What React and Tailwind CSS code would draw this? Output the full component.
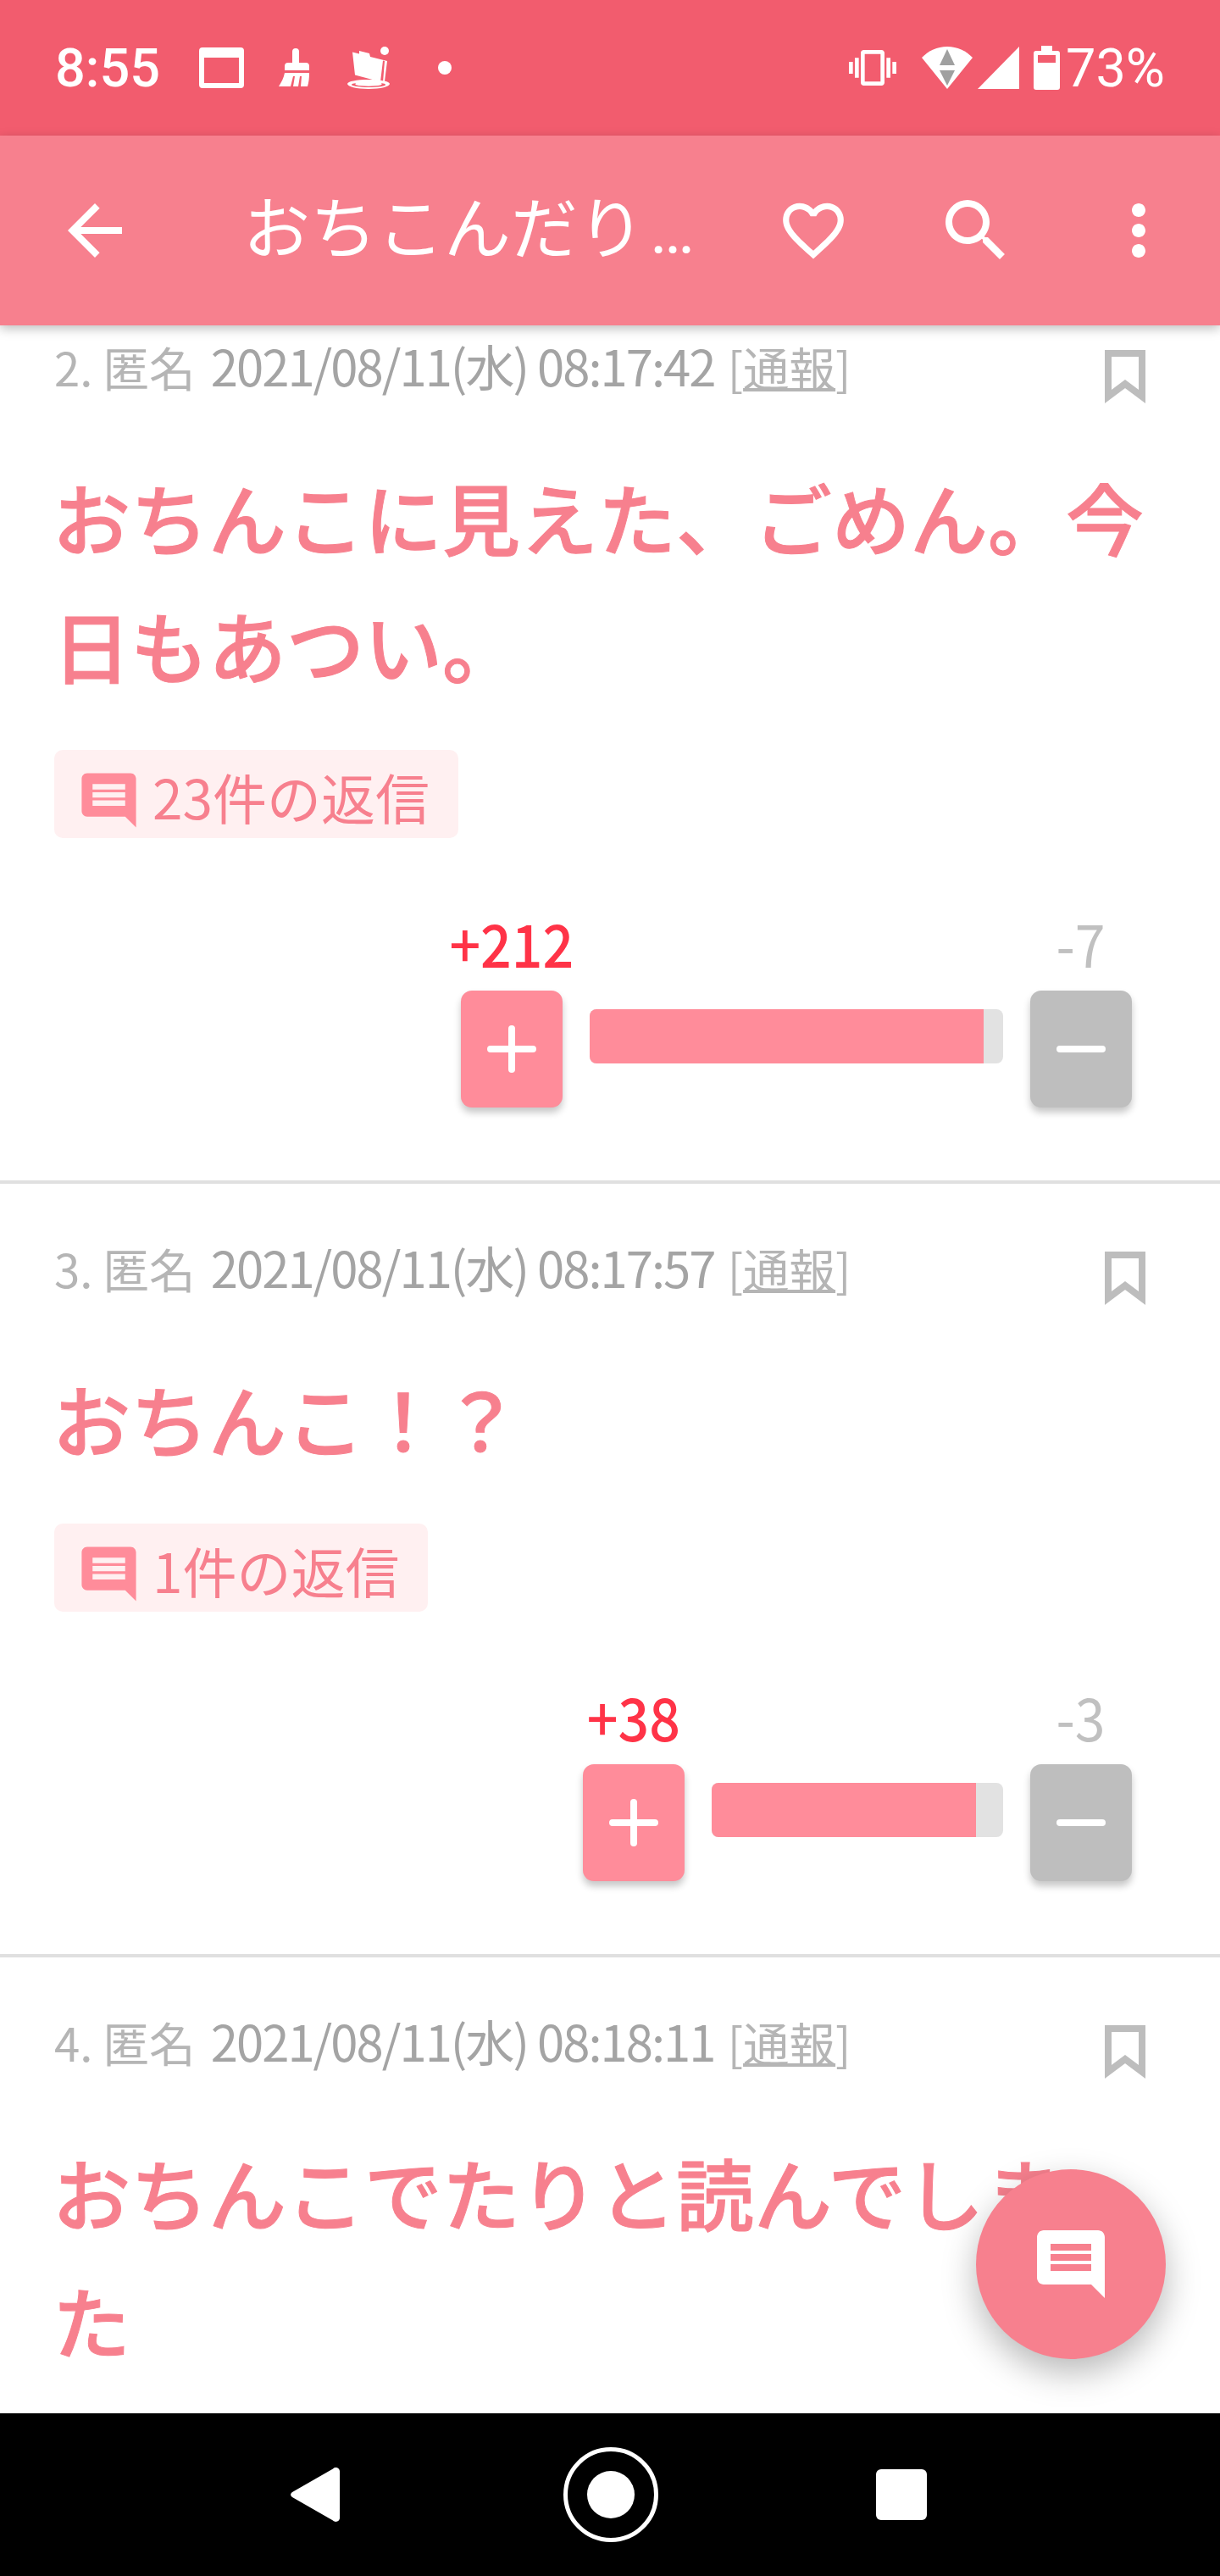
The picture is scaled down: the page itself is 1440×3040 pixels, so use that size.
import React from 'react';

const cjk = "font-['Noto_Sans_CJK_JP',sans-serif]";

const posts = [
    {
        id: 2,
        time: '2021/08/11(水) 08:17:42',
        title: 'おちんこに見えた、ごめん。今日もあつい。',
        replies: '23件の返信',
        badgeWidth: 'w-[477px]',
        plus: '+212',
        minus: '-7',
        barWidth: 'w-[488px]',
        fillWidth: 'w-[465px]',
        titleHeight: 'h-[302px]',
    },
    {
        id: 3,
        time: '2021/08/11(水) 08:17:57',
        title: 'おちんこ！？',
        replies: '1件の返信',
        badgeWidth: 'w-[441px]',
        plus: '+38',
        minus: '-3',
        barWidth: 'w-[344px]',
        fillWidth: 'w-[312px]',
        titleHeight: 'h-[151px]',
    },
    {
        id: 4,
        time: '2021/08/11(水) 08:18:11',
        title: 'おちんこでたりと読んでしまった',
        titleHeight: 'h-[302px]',
    },
];

const MessageIcon = ({ className }) => (
    <svg viewBox="0 0 24 24" fill="currentColor" className={className}>
        <path d="M20 2H4c-1.1 0-1.99.9-1.99 2L2 22l4-4h14c1.1 0 2-.9 2-2V4c0-1.1-.9-2-2-2zm-2 12H6v-2h12v2zm0-3H6V9h12v2zm0-3H6V6h12v2z" />
    </svg>
);

const StatusBar = () => (
    <div className="h-[160px] shrink-0 bg-[#f25c6e] text-white flex items-center justify-between pl-[65px] pr-[65px]">
        <div className="flex items-center">
            <span className="font-['Roboto',sans-serif] font-medium text-[63px] leading-none w-[170px]">8:55</span>
            <svg viewBox="0 0 53 48" className="w-[53px] h-[48px]" fill="currentColor">
                <path fillRule="evenodd" d="M4 0h45a4 4 0 0 1 4 4v40a4 4 0 0 1-4 4H4a4 4 0 0 1-4-4V4a4 4 0 0 1 4-4zM6 12v30h41V12z" />
            </svg>
            <svg viewBox="0 0 36 46" className="w-[36px] h-[46px] ml-[41px]" fill="currentColor">
                <path d="M16 4a4 4 0 0 1 8 0v13h8a4 4 0 0 1 4 4v5H7v-5a4 4 0 0 1 4-4h5z" />
                <path d="M7 29h29c0 6-.5 11-2 16h-8l1-12h-2l-2 12h-6l2-12h-2l-3 12H0c3-5 6-10 7-16z" />
            </svg>
            <svg viewBox="0 0 50 50" className="w-[50px] h-[50px] ml-[45px]" fill="currentColor">
                <path d="M14 5l12 3 1 4 20 5-3 24-2 1 2-25-2-.5-3 25-30-8-3-27 20 5-12-3z" />
                <circle cx="44" cy="5" r="5" />
                <path fillRule="evenodd" d="M25 39c14 0 25 2 25 5s-11 6-25 6S0 47 0 44s11-5 25-5zm-15 4c-3 .5-5 1-5 2s9 3 20 3 20-1 20-3c0-1-2-1.500-5-2 1 1 1 2-1 2.500-6 1.500-22 1.500-28 0-2-.5-2-1.500-1-2.500z" />
            </svg>
            <span className="w-[16px] h-[16px] rounded-full bg-white ml-[57px]" />
        </div>
        <div className="flex items-center">
            <svg viewBox="0 0 24 24" className="w-[56px] h-[56px]" fill="currentColor">
                <path d="M0 15h2V9H0v6zm3 2h2V7H3v10zm19-8v6h2V9h-2zm-3 8h2V7h-2v10zM16.500 3h-9C6.670 3 6 3.670 6 4.500v15c0 .83.67 1.500 1.500 1.500h9c.83 0 1.500-.67 1.500-1.500v-15c0-.83-.67-1.500-1.500-1.500zM16 19H8V5h8v14z" />
            </svg>
            <svg viewBox="0 0 60 50" className="w-[60px] h-[50px] ml-[30px]">
                <path d="M0 13C8 5 18 0 30 0s22 5 30 13L30 50z" fill="#fff" />
                <path d="M30 3l9 19H21z" fill="#a0a0a0" />
                <path d="M21 28h18l-9 18z" fill="#a0a0a0" />
            </svg>
            <svg viewBox="0 0 49 50" className="w-[49px] h-[50px] ml-[6px]" fill="currentColor">
                <path d="M0 50L49 0v50z" />
            </svg>
            <svg viewBox="0 0 31 52" className="w-[31px] h-[52px] ml-[17px]" fill="currentColor">
                <path fillRule="evenodd" d="M9 0h13v6h6a3 3 0 0 1 3 3v40a3 3 0 0 1-3 3H3a3 3 0 0 1-3-3V9a3 3 0 0 1 3-3h6zM5 11v9h21v-9z" />
            </svg>
            <span className="font-['Roboto',sans-serif] text-[63px] leading-none ml-[7px]">73%</span>
        </div>
    </div>
);

const AppBar = () => (
    <div className="relative z-10 h-[224px] shrink-0 bg-[#f7808e] text-white flex items-center shadow-[0_4px_12px_rgba(0,0,0,0.25)]">
        <svg viewBox="0 0 24 24" fill="currentColor" className="w-[96px] h-[96px] ml-[64px] shrink-0">
            <path d="M20 11H7.830l5.590-5.590L12 4l-8 8 8 8 1.410-1.410L7.830 13H20v-2z" />
        </svg>
        <div className={`ml-[127px] -mt-[8px] flex-1 text-[79px] leading-none whitespace-nowrap ${cjk}`}>
            おちこんだり<span className="ml-[6px] font-['Roboto',sans-serif]">…</span>
        </div>
        <div className="w-[192px] flex justify-center">
            <svg viewBox="0 0 24 24" fill="currentColor" className="w-[86px] h-[86px]">
                <path d="M16.500 3c-1.740 0-3.410.81-4.500 2.090C10.910 3.810 9.240 3 7.500 3 4.420 3 2 5.420 2 8.500c0 3.780 3.400 6.860 8.550 11.540L12 21.350l1.450-1.320C18.600 15.360 22 12.280 22 8.500 22 5.420 19.580 3 16.500 3zm-4.400 15.550l-.1.1-.1-.1C7.140 14.240 4 11.390 4 8.500 4 6.500 5.500 5 7.500 5c1.540 0 3.040.99 3.570 2.360h1.870C13.460 5.990 14.960 5 16.500 5c2 0 3.500 1.500 3.500 3.500 0 2.890-3.140 5.740-7.900 10.050z" />
            </svg>
        </div>
        <div className="w-[192px] flex justify-center">
            <svg viewBox="0 0 24 24" fill="currentColor" className="w-[96px] h-[96px]">
                <path d="M15.500 14h-.79l-.28-.27C15.410 12.590 16 11.110 16 9.500 16 5.910 13.090 3 9.500 3S3 5.910 3 9.500 5.910 16 9.500 16c1.610 0 3.090-.59 4.230-1.570l.27.28v.79l5 4.990L20.490 19l-4.990-5zm-6 0C7.010 14 5 11.990 5 9.500S7.010 5 9.500 5 14 7.010 14 9.500 11.990 14 9.500 14z" />
            </svg>
        </div>
        <div className="w-[192px] flex justify-center">
            <svg viewBox="0 0 24 24" fill="currentColor" className="w-[96px] h-[96px]">
                <path d="M12 8c1.100 0 2-.9 2-2s-.9-2-2-2-2 .9-2 2 .9 2 2 2zm0 2c-1.100 0-2 .9-2 2s.9 2 2 2 2-.9 2-2-.9-2-2-2zm0 6c-1.100 0-2 .9-2 2s.9 2 2 2 2-.9 2-2-.9-2-2-2z" />
            </svg>
        </div>
    </div>
);

const VoteButton = ({ label, color, labelColor, children }) => (
    <div className="w-[120px] flex flex-col items-center">
        <div className={`h-[72px] text-[70px] leading-[72px] whitespace-nowrap scale-x-[0.92] ${cjk} ${labelColor}`}>{label}</div>
        <div className={`mt-[21px] w-[120px] h-[138px] rounded-[13px] flex items-center justify-center shadow-[0_6px_8px_rgba(0,0,0,0.22)] ${color}`}>
            {children}
        </div>
    </div>
);

const Post = ({ post }) => (
    <div className="shrink-0 px-[64px] pt-[66px]">
        <div className="flex justify-between h-[64px]">
            <div className={`text-[54.5px] leading-[64px] text-[#b5b5b5] whitespace-nowrap ${cjk}`}>
                {post.id}. 匿名 <span className="ml-[6px] mr-[3px] text-[58px] tracking-[-2px] text-[#a4a4a4]">{post.time}</span> [<span className="underline decoration-4 underline-offset-[2px]">通報</span>]
            </div>
            <svg viewBox="0 0 48 63" className="w-[48px] h-[63px] mt-[14px] mr-[24px] shrink-0" fill="none" stroke="#bdbdbd" strokeWidth="8">
                <path d="M4 4h40v51L24 40 4 55z" />
            </svg>
        </div>
        <div className={`mt-[70px] -ml-[2px] text-[92px] leading-[151px] font-medium [-webkit-text-stroke:1px_#f7808e] text-[#f7808e] ${cjk} ${post.titleHeight}`}>
            {post.title}
        </div>
        {post.replies && (
            <>
                <div className={`mt-[50px] h-[104px] rounded-[10px] bg-[#fff0f1] text-[#ff8c9a] flex items-center pl-[26px] ${post.badgeWidth}`}>
                    <MessageIcon className="w-[77px] h-[77px] -scale-x-100 mt-[14px] shrink-0" />
                    <span className={`ml-[13px] mt-[4px] text-[64px] leading-none text-[#f7808e] whitespace-nowrap ${cjk}`}>{post.replies}</span>
                </div>
                <div className="mt-[87px] flex justify-end pr-[40px]">
                    <VoteButton label={post.plus} color="bg-[#ff8c9a]" labelColor="text-[#ff3347] font-medium">
                        <svg viewBox="0 0 58 56" className="w-[58px] h-[56px]" stroke="#fff" strokeWidth="8" strokeLinecap="round">
                            <path d="M4 28h50M29 4v48" />
                        </svg>
                    </VoteButton>
                    <div className={`ml-[32px] mt-[115px] h-[64px] rounded-[8px] bg-[#e2e2e2] overflow-hidden ${post.barWidth}`}>
                        <div className={`h-full bg-[#ff8c9a] ${post.fillWidth}`} />
                    </div>
                    <div className="ml-[32px]">
                        <VoteButton label={post.minus} color="bg-[#bebebe]" labelColor="text-[#c0c0c0]">
                            <svg viewBox="0 0 58 8" className="w-[58px] h-[8px]" stroke="#fff" strokeWidth="8" strokeLinecap="round">
                                <path d="M4 4h50" />
                            </svg>
                        </VoteButton>
                    </div>
                </div>
                <div className="h-[86px]" />
                <div className="-mx-[64px] h-[4px] bg-[#e0e0e0]" />
            </>
        )}
    </div>
);

const NavBar = () => (
    <div className="h-[192px] shrink-0 bg-black flex items-center relative z-10">
        <svg viewBox="0 0 58 64" className="w-[58px] h-[64px] ml-[343px]" fill="#fff">
            <path d="M50 1.500c3-3 8-1 8 3v55c0 4-5 6-8 3L2 35c-2.500-2-2.500-4 0-6z" />
        </svg>
        <div className="ml-[264px] w-[112px] h-[112px] rounded-full border-[5px] border-white flex items-center justify-center">
            <div className="w-[56px] h-[56px] rounded-full bg-white" />
        </div>
        <div className="ml-[257px] w-[60px] h-[60px] rounded-[6px] bg-white" />
    </div>
);

const App = () => (
    <div className="relative w-[1440px] h-[3040px] overflow-hidden bg-white flex flex-col">
        <StatusBar />
        <AppBar />
        <div className="flex-1 overflow-hidden flex flex-col -mt-[51px] min-h-0">
            {posts.map((post) => <Post key={post.id} post={post} />)}
        </div>
        <NavBar />
        <div className="absolute left-[1152px] top-[2560px] w-[224px] h-[224px] rounded-full bg-[#f7808e] text-white flex items-center justify-center shadow-[0_16px_40px_rgba(0,0,0,0.28)]">
            <MessageIcon className="w-[96px] h-[96px] -scale-x-100" />
        </div>
    </div>
);

export default App;
